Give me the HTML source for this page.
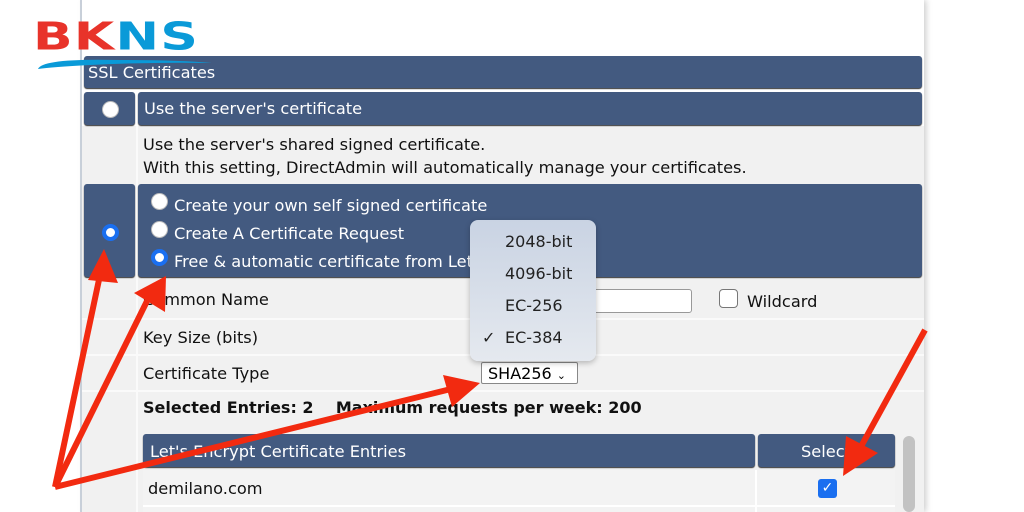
<!DOCTYPE html>
<html><head><meta charset="utf-8"><style>
*{box-sizing:border-box;margin:0;padding:0}
body{width:1024px;height:512px;overflow:hidden;background:#fff;font-family:"DejaVu Sans",Verdana,sans-serif;position:relative}
.a{position:absolute;white-space:nowrap}
.blue{background:#435a80;border-radius:3px;color:#fff;box-shadow:0 1px 1px #333}
.t{font-size:16.2px;color:#111}
.w{color:#fff;font-size:16.2px}
.rad{position:absolute;width:17px;height:17px;border-radius:50%;background:#fff;border:1px solid #bbb}
.rad.on{border:4px solid #1a6ff0;background:#fff}
</style></head><body>
<div class="a" style="left:80px;top:0;width:2px;height:512px;background:#c8d0dc"></div>
<div class="a" style="left:82px;top:0;width:842px;height:512px;background:#fff;box-shadow:2px 0 6px #ccc"></div>
<div class="a" style="left:82px;top:126px;width:842px;height:386px;background:#f1f1f1"></div>
<div class="a" style="left:136px;top:126px;width:2px;height:386px;background:#fafafa"></div>
<div class="a" style="left:82px;top:318px;width:842px;height:2px;background:#fafafa"></div>
<div class="a" style="left:82px;top:354px;width:842px;height:2px;background:#fafafa"></div>
<div class="a" style="left:82px;top:390px;width:842px;height:2px;background:#fafafa"></div>

<div class="a blue" style="left:84px;top:56px;width:838px;height:32px"></div>
<div class="a w" style="left:88px;top:63px">SSL Certificates</div>
<div class="a blue" style="left:84px;top:92px;width:51px;height:33px"></div>
<div class="rad" style="left:102px;top:101px"></div>
<div class="a blue" style="left:138px;top:92px;width:784px;height:33px"></div>
<div class="a w" style="left:144px;top:99px">Use the server's certificate</div>
<div class="a t" style="left:143px;top:133px;line-height:23px">Use the server's shared signed certificate.<br>With this setting, DirectAdmin will automatically manage your certificates.</div>
<div class="a blue" style="left:84px;top:184px;width:51px;height:93px"></div>
<div class="rad on" style="left:102px;top:224px"></div>
<div class="a blue" style="left:138px;top:184px;width:784px;height:93px"></div>
<div class="rad" style="left:151px;top:193px"></div>
<div class="rad" style="left:151px;top:221px"></div>
<div class="rad on" style="left:151px;top:249px"></div>
<div class="a w" style="left:174px;top:196px">Create your own self signed certificate</div>
<div class="a w" style="left:174px;top:224px">Create A Certificate Request</div>
<div class="a w" style="left:174px;top:252px">Free &amp; automatic certificate from Let's</div>

<div class="a t" style="left:143px;top:290px">Common Name</div>
<div class="a" style="left:590px;top:289px;width:102px;height:24px;background:#fff;border:1px solid #999;border-radius:3px"></div>
<div class="a" style="left:719px;top:289px;width:19px;height:19px;background:#fff;border:1px solid #777;border-radius:4px"></div>
<div class="a t" style="left:747px;top:292px">Wildcard</div>
<div class="a t" style="left:143px;top:328px">Key Size (bits)</div>
<div class="a t" style="left:143px;top:364px">Certificate Type</div>
<div class="a" style="left:481px;top:362px;width:97px;height:22px;background:#fff;border:1px solid #888;border-radius:2px;font-size:16px;padding:1px 0 0 6px">SHA256 <span style="font-size:11px">&#8964;</span></div>
<div class="a t" style="left:143px;top:398px;font-weight:bold;font-size:16px">Selected Entries: 2 &nbsp;&nbsp; Maximum requests per week: 200</div>

<div class="a blue" style="left:143px;top:434px;width:612px;height:33px"></div>
<div class="a w" style="left:150px;top:442px">Let's Encrypt Certificate Entries</div>
<div class="a blue" style="left:758px;top:434px;width:137px;height:33px"></div>
<div class="a w" style="left:801px;top:442px">Select</div>
<div class="a" style="left:903px;top:436px;width:12px;height:76px;background:#c2c2c2;border-radius:6px"></div>
<div class="a" style="left:143px;top:470px;width:752px;height:42px;background:#f3f3f3"></div>
<div class="a" style="left:755px;top:470px;width:2px;height:42px;background:#fff"></div>
<div class="a" style="left:143px;top:505px;width:752px;height:2px;background:#fff"></div>
<div class="a t" style="left:148px;top:479px">demilano.com</div>
<div class="a" style="left:818px;top:479px;width:19px;height:19px;background:#1a6ff0;border-radius:3px;color:#fff;font-size:14px;font-weight:bold;text-align:center;line-height:19px">&#10003;</div>

<div class="a" style="left:470px;top:220px;width:126px;height:141px;background:linear-gradient(#c9d3e3,#e5e9ef);border-radius:8px;box-shadow:0 2px 6px rgba(0,0,0,.25);font-size:16px;color:#222">
<div class="a" style="left:35px;top:12px">2048-bit</div>
<div class="a" style="left:35px;top:44px">4096-bit</div>
<div class="a" style="left:35px;top:76px">EC-256</div>
<div class="a" style="left:12px;top:108px">&#10003;</div>
<div class="a" style="left:35px;top:108px">EC-384</div>
</div>

<div class="a" style="left:33px;top:16px;font-size:40px;font-family:'DejaVu Sans',sans-serif;font-weight:bold;line-height:44px;transform:scale(1.3,0.95);transform-origin:0 0;letter-spacing:1px"><span style="color:#e8332a">BK</span><span style="color:#0a9ad8">NS</span></div>
<svg class="a" style="left:0;top:0" width="1024" height="512">
<path d="M38 69 Q42 58 120 60 Q180 60 212 63 Q150 62 90 65 Q52 67 38 69Z" fill="#0a9ad8"/>
<g stroke="#f22a10" stroke-width="6" fill="#f22a10">
<line x1="55" y1="487" x2="100" y2="275"/>
<line x1="55" y1="487" x2="150" y2="295"/>
<line x1="55" y1="487" x2="455" y2="388"/>
<line x1="925" y1="330" x2="858" y2="452"/>
</g>
<g fill="#f22a10">
<polygon points="104,249 88,280 118,283"/>
<polygon points="166,276 134,293 165,312"/>
<polygon points="480,383 443,375 452,407"/>
<polygon points="843,476 878,453 846,436"/>
</g>
</svg>
</body></html>
